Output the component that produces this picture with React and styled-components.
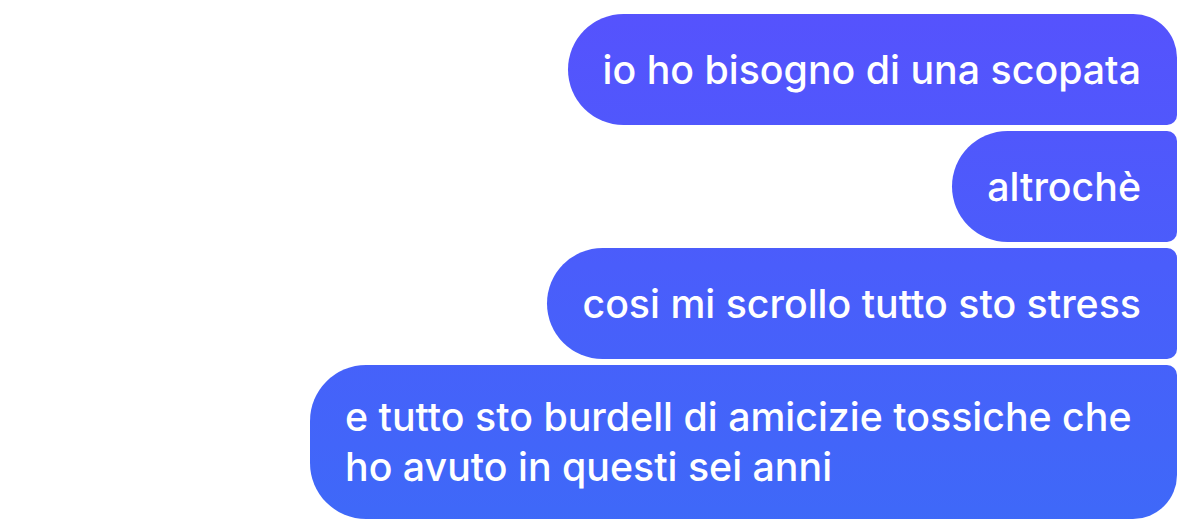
import React from "react";
import styled, { createGlobalStyle, css } from "styled-components";

const Global = createGlobalStyle`
  html, body { margin: 0; padding: 0; background: #ffffff; }
  body { font-family: Inter, "Noto Sans", sans-serif; -webkit-font-smoothing: antialiased; }
`;

const Thread = styled.div`
  display: flex;
  flex-direction: column;
  align-items: flex-end;
  gap: 6px;
  padding: 14px 23px 0 0;
  width: 1200px;
  height: 532px;
  box-sizing: border-box;
`;

const big = "44px";
const pill = "56px";
const small = "10px";

const Bubble = styled.div`
  box-sizing: border-box;
  max-width: 867px;
  min-height: 111px;
  padding: 27px 36px 27px 35px;
  display: flex;
  align-items: center;
  color: #ffffff;
  font-size: 39.3px;
  line-height: 50px;
  font-weight: 500;
  letter-spacing: 0;
  background: linear-gradient(180deg, #5652fd 0%, #4a5dfb 50%, #3e69f8 100%) fixed;
  border-radius: ${pill} ${small} ${small} ${pill};
  ${(p) =>
    p.$first &&
    css`
      border-top-right-radius: ${big};
    `}
  ${(p) =>
    p.$last &&
    css`
      border-bottom-right-radius: ${big};
    `}
`;

const messages = [
  "io ho bisogno di una scopata",
  "altrochè",
  "cosi mi scrollo tutto sto stress",
  "e tutto sto burdell di amicizie tossiche che ho avuto in questi sei anni",
];

export default function App() {
  return (
    <>
      <Global />
      <Thread>
        {messages.map((m, i) => (
          <Bubble key={i} $first={i === 0} $last={i === messages.length - 1}>
            {m}
          </Bubble>
        ))}
      </Thread>
    </>
  );
}
